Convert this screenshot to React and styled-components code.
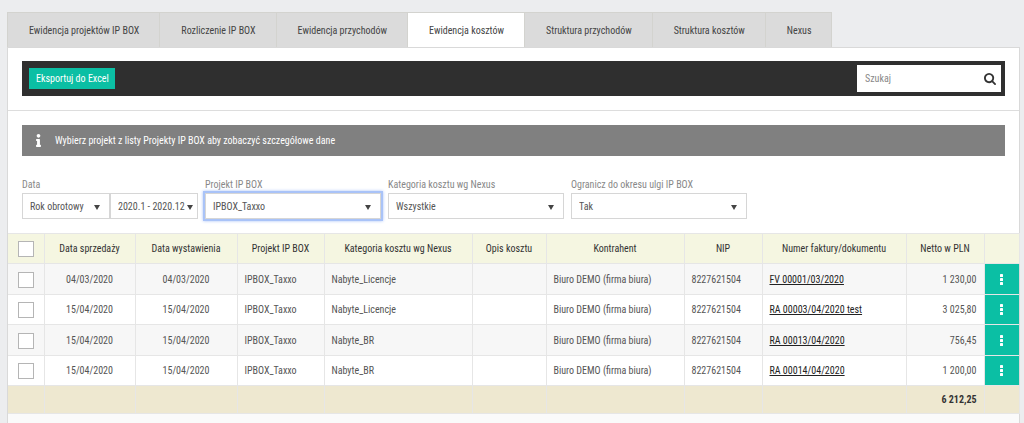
import { useState } from "react";
import styled, { createGlobalStyle } from "styled-components";
import { FaInfo } from "react-icons/fa";

const tabs = [
    "Ewidencja projektów IP BOX",
    "Rozliczenie IP BOX",
    "Ewidencja przychodów",
    "Ewidencja kosztów",
    "Struktura przychodów",
    "Struktura kosztów",
    "Nexus",
];

const columns = [
    { label: "Data sprzedaży", width: 91 },
    { label: "Data wystawienia", width: 102 },
    { label: "Projekt IP BOX", width: 87 },
    { label: "Kategoria kosztu wg Nexus", width: 148 },
    { label: "Opis kosztu", width: 74 },
    { label: "Kontrahent", width: 138 },
    { label: "NIP", width: 78 },
    { label: "Numer faktury/dokumentu", width: 144 },
    { label: "Netto w PLN", width: 78 },
];

const costs = [
    {
        date: "04/03/2020",
        category: "Nabyte_Licencje",
        document: "FV 00001/03/2020",
        net: "1 230,00",
    },
    {
        date: "15/04/2020",
        category: "Nabyte_Licencje",
        document: "RA 00003/04/2020 test",
        net: "3 025,80",
    },
    {
        date: "15/04/2020",
        category: "Nabyte_BR",
        document: "RA 00013/04/2020",
        net: "756,45",
    },
    {
        date: "15/04/2020",
        category: "Nabyte_BR",
        document: "RA 00014/04/2020",
        net: "1 200,00",
    },
];

function Dropdown({ id, value, ...props }) {
    return (
        <SelectWrapper>
            <Select id={id} defaultValue={value} {...props}>
                <option>{value}</option>
            </Select>
            <Arrow viewBox="0 0 6 5">
                <path d="M0 0h6L3 5z" />
            </Arrow>
        </SelectWrapper>
    );
}

function SearchIcon() {
    return (
        <svg width="12" height="12" viewBox="0 128 1664 1664" fill="currentColor">
            <path d="M1152 832q0-185-131.5-316.5t-316.5-131.5-316.5 131.5-131.5 316.5 131.5 316.5 316.5 131.5 316.5-131.5 131.5-316.5zm512 832q0 52-38 90t-90 38q-54 0-90-38l-343-342q-179 124-399 124-143 0-273.5-55.5t-225-150-150-225-55.5-273.5 55.5-273.5 150-225 225-150 273.5-55.5 273.5 55.5 225 150 150 225 55.5 273.5q0 220-124 399l343 343q37 37 37 90z" />
        </svg>
    );
}

export default function App() {
    const [activeTab, setActiveTab] = useState("Ewidencja kosztów");

    return (
        <>
            <GlobalStyle />
            <Page>
                <Tabs>
                    {tabs.map((tab) => (
                        <Tab
                            key={tab}
                            type="button"
                            $isActive={tab === activeTab}
                            onClick={() => setActiveTab(tab)}
                        >
                            {tab}
                        </Tab>
                    ))}
                </Tabs>
                <Panel>
                    <ToolbarSection>
                        <Toolbar>
                            <ExportButton type="button">
                                Eksportuj do Excel
                            </ExportButton>
                            <Search>
                                <SearchInput
                                    placeholder="Szukaj"
                                    aria-label="Szukaj"
                                />
                                <SearchButton type="button" aria-label="Szukaj">
                                    <SearchIcon />
                                </SearchButton>
                            </Search>
                        </Toolbar>
                    </ToolbarSection>
                    <Notice>
                        <FaInfo size={13} />
                        <span>
                            Wybierz projekt z listy Projekty IP BOX aby zobaczyć
                            szczegółowe dane
                        </span>
                    </Notice>
                    <Filters>
                        <Filter>
                            <label htmlFor="period">Data</label>
                            <SelectPair>
                                <Dropdown id="period" value="Rok obrotowy" />
                                <Dropdown
                                    id="range"
                                    value="2020.1 - 2020.12"
                                    aria-label="Zakres"
                                />
                            </SelectPair>
                        </Filter>
                        <Filter>
                            <label htmlFor="project">Projekt IP BOX</label>
                            <Dropdown
                                id="project"
                                value="IPBOX_Taxxo"
                                autoFocus
                            />
                        </Filter>
                        <Filter>
                            <label htmlFor="category">
                                Kategoria kosztu wg Nexus
                            </label>
                            <Dropdown id="category" value="Wszystkie" />
                        </Filter>
                        <Filter>
                            <label htmlFor="limit">
                                Ogranicz do okresu ulgi IP BOX
                            </label>
                            <Dropdown id="limit" value="Tak" />
                        </Filter>
                    </Filters>
                    <Table>
                        <colgroup>
                            <col width={36} />
                            {columns.map((column) => (
                                <col key={column.label} width={column.width} />
                            ))}
                            <col width={35} />
                        </colgroup>
                        <thead>
                            <tr>
                                <HeadCell>
                                    <Checkbox aria-label="Zaznacz wszystkie" />
                                </HeadCell>
                                {columns.map((column) => (
                                    <HeadCell key={column.label}>
                                        {column.label}
                                    </HeadCell>
                                ))}
                                <HeadCell />
                            </tr>
                        </thead>
                        <tbody>
                            {costs.map((cost) => (
                                <Row key={cost.document}>
                                    <Cell $align="center">
                                        <Checkbox aria-label={cost.document} />
                                    </Cell>
                                    <Cell $align="center">{cost.date}</Cell>
                                    <Cell $align="center">{cost.date}</Cell>
                                    <Cell>IPBOX_Taxxo</Cell>
                                    <Cell>{cost.category}</Cell>
                                    <Cell />
                                    <Cell>Biuro DEMO (firma biura)</Cell>
                                    <Cell>8227621504</Cell>
                                    <Cell>
                                        <DocumentLink href="#">
                                            {cost.document}
                                        </DocumentLink>
                                    </Cell>
                                    <Cell $align="right">{cost.net}</Cell>
                                    <ActionCell>
                                        <MenuButton
                                            type="button"
                                            aria-label="Akcje"
                                        >
                                            <svg
                                                width="3"
                                                height="11"
                                                viewBox="0 0 3 11"
                                                fill="currentColor"
                                            >
                                                <rect width="3" height="3" rx="0.6" />
                                                <rect y="4" width="3" height="3" rx="0.6" />
                                                <rect y="8" width="3" height="3" rx="0.6" />
                                            </svg>
                                        </MenuButton>
                                    </ActionCell>
                                </Row>
                            ))}
                        </tbody>
                        <tfoot>
                            <tr>
                                <TotalCell />
                                {columns.map((column) => (
                                    <TotalCell key={column.label}>
                                        {column.label === "Netto w PLN" &&
                                            "6 212,25"}
                                    </TotalCell>
                                ))}
                                <TotalCell />
                            </tr>
                        </tfoot>
                    </Table>
                    <PanelEnd />
                </Panel>
            </Page>
        </>
    );
}

const GlobalStyle = createGlobalStyle`
    * {
        box-sizing: border-box;
    }

    body {
        margin: 0;
        background-color: #ecedef;
        color: #555;
    }

    body, button, input, select {
        font-family: "Roboto Condensed", "Liberation Sans Narrow", Roboto, sans-serif;
        font-size: 10px;
        line-height: 14px;
    }
`;

const Page = styled.div`
    display: flex;
    flex-direction: column;
    min-height: 100vh;
    padding: 12px 4px 0 7px;
`;

const Tabs = styled.nav`
    display: flex;
    margin-bottom: -1px;
`;

const Tab = styled.button`
    height: 36px;
    padding: 2px 20px 0 21px;
    border: 1px solid #d3d3cf;
    border-bottom-color: ${(props) => (props.$isActive ? "#fff" : "#dbdbdb")};
    border-left-width: 0;
    background-color: ${(props) => (props.$isActive ? "#fff" : "#dbdbdb")};
    color: #444;
    white-space: nowrap;

    &:first-child {
        border-left-width: 1px;
    }
`;

const Panel = styled.main`
    display: flex;
    flex-direction: column;
    flex: 1;
    border: 1px solid #d9d9d9;
    border-bottom: 0;
    background-color: #fff;
`;

const ToolbarSection = styled.div`
    padding: 13px 14px 14px;
    border-bottom: 1px solid #ddd;
`;

const Toolbar = styled.div`
    display: flex;
    align-items: center;
    justify-content: space-between;
    height: 35px;
    padding: 0 4px 0 7px;
    background-color: #2f2f2f;
`;

const ExportButton = styled.button`
    height: 21px;
    padding: 0 6px 0 7px;
    border: 0;
    background-color: #0bbfa4;
    color: #fff;
`;

const Search = styled.div`
    display: flex;
    width: 144px;
    height: 27px;
    background-color: #fff;
`;

const SearchInput = styled.input`
    flex: 1;
    min-width: 0;
    padding: 0 8px;
    border: 0;
    background: none;

    &::placeholder {
        color: #888;
    }
`;

const SearchButton = styled.button`
    display: flex;
    align-items: center;
    padding: 0 5px;
    border: 0;
    background: none;
    color: #333;
`;

const Notice = styled.div`
    display: flex;
    align-items: center;
    gap: 10px;
    height: 31px;
    margin: 14px 14px 0;
    padding: 0 10px;
    background-color: #808080;
    color: #fff;
`;

const Filters = styled.div`
    display: flex;
    gap: 7px;
    padding: 22px 14px 14px;
`;

const Filter = styled.div`
    display: flex;
    flex-direction: column;
    gap: 1px;
    width: 176px;
    color: #888;
`;

const SelectPair = styled.div`
    display: grid;
    grid-template-columns: 1fr 1fr;
`;

const SelectWrapper = styled.div`
    position: relative;
`;

const Select = styled.select`
    appearance: none;
    display: block;
    width: 100%;
    height: 26px;
    padding: 2px 7px 0;
    border: 1px solid #d6d6d6;
    border-radius: 0;
    background-color: #fff;
    color: #555;

    &:focus {
        outline: 2px solid #a9c3f8;
        box-shadow: 0 0 3px 2px #a9c3f8;
    }
`;

const Arrow = styled.svg`
    position: absolute;
    top: 12px;
    right: 10px;
    width: 6px;
    height: 5px;
    fill: #444;
    pointer-events: none;

    #range + & {
        right: 5px;
    }
`;

const Table = styled.table`
    width: 100%;
    table-layout: fixed;
    border-collapse: collapse;
`;

const HeadCell = styled.th`
    height: 30px;
    padding: 1px 0 0;
    border: 1px solid #e6e6e6;
    border-left: 0;
    background-color: #f5f6e1;
    color: #333;
    font-weight: 400;
    white-space: nowrap;
`;

const Row = styled.tr`
    height: 30px;
    background-color: #fff;

    &:nth-child(odd) {
        height: 31px;
        background-color: #f7f7f7;
    }
`;

const Cell = styled.td`
    padding: 1px 7px 0;
    border: 1px solid #e6e6e6;
    border-left: 0;
    text-align: ${(props) => props.$align || "left"};
    white-space: nowrap;
`;

const ActionCell = styled.td`
    padding: 0;
    border-bottom: 1px solid #e6e6e6;
    background-color: #0bbfa4;
`;

const MenuButton = styled.button`
    display: flex;
    align-items: center;
    justify-content: center;
    width: 100%;
    height: 29px;
    padding: 0;
    border: 0;
    background: none;
    color: #fff;
`;

const TotalCell = styled.td`
    height: 28px;
    padding: 0 7px;
    border: 1px solid #e6e6e6;
    border-left: 0;
    background-color: #eee8d0;
    color: #333;
    font-weight: 700;
    text-align: right;
`;

const DocumentLink = styled.a`
    color: #222;
`;

const Checkbox = styled.input.attrs({ type: "checkbox" })`
    appearance: none;
    display: block;
    width: 16px;
    height: 16px;
    margin: 0 auto;
    border: 1px solid #b5b5b5;
    background-color: #fff;
`;

const PanelEnd = styled.div`
    flex: 1;
    background-color: #fafafa;
`;
